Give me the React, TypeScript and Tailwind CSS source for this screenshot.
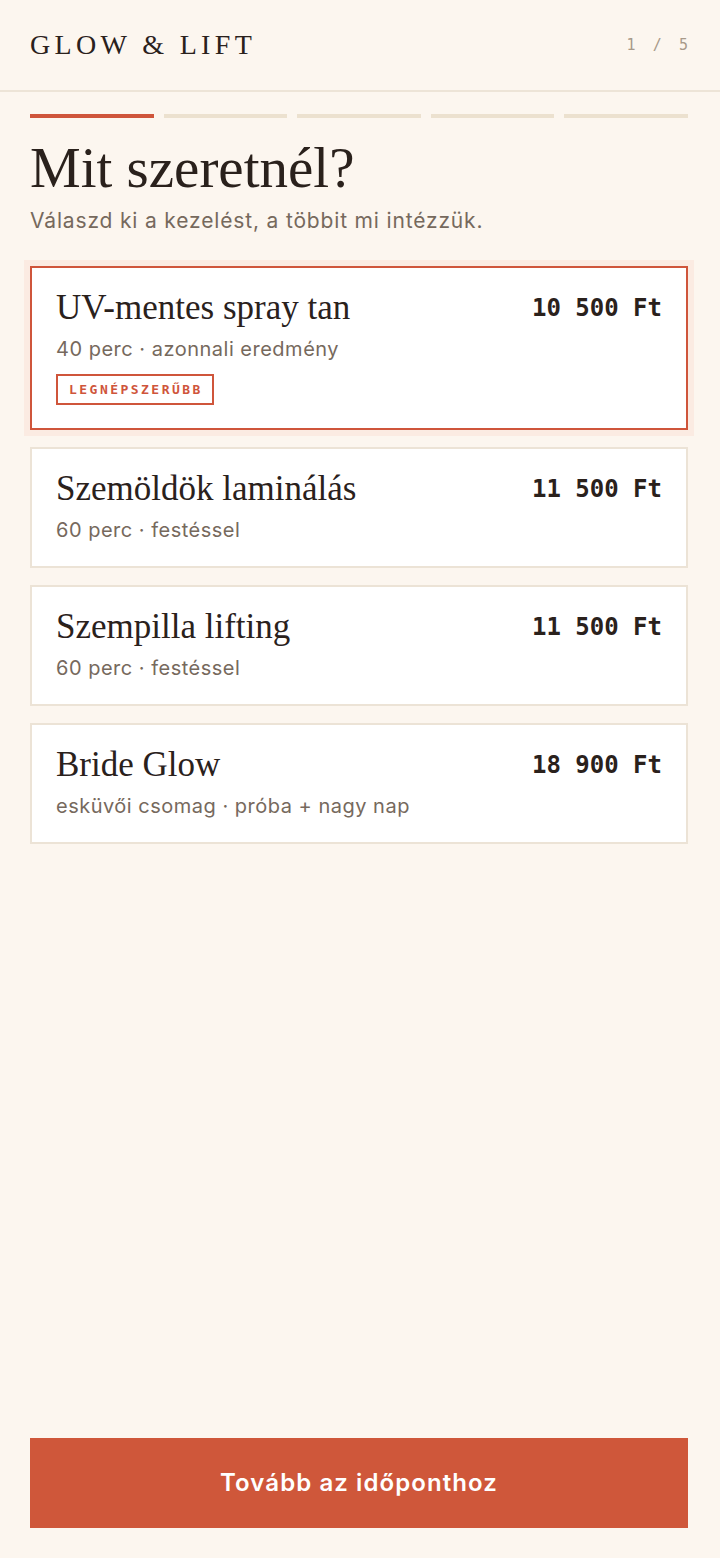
import React from 'react';

const serif = "font-['Liberation_Serif',serif]";
const sans = "font-['Inter',sans-serif]";
const mono = "font-['DejaVu_Sans_Mono',monospace]";

const treatments = [
  { name: 'UV-mentes spray tan', meta: '40 perc · azonnali eredmény', price: '10 500 Ft', badge: 'LEGNÉPSZERŰBB', selected: true },
  { name: 'Szemöldök laminálás', meta: '60 perc · festéssel', price: '11 500 Ft' },
  { name: 'Szempilla lifting', meta: '60 perc · festéssel', price: '11 500 Ft' },
  { name: 'Bride Glow', meta: 'esküvői csomag · próba + nagy nap', price: '18 900 Ft' },
];

const App = () => {
  return (
    <div className={`min-h-screen bg-[#fcf6ef] flex flex-col ${sans}`}>
      {/* Header */}
      <header className="h-[92px] border-b-2 border-[#ede4d7] pl-[30px] pr-[32px] flex items-center justify-between">
        <span className={`${serif} text-[28px] tracking-[0.155em] text-[#2a211c]`}>GLOW &amp; LIFT</span>
        <span className={`${mono} text-[15px] tracking-[0.27em] text-[#a89a8a] -mr-[4px]`}>1 / 5</span>
      </header>

      <main className="flex-1 flex flex-col pl-[30px] pr-[32px]">
        {/* Progress */}
        <div className="mt-[22px] grid grid-cols-5 gap-[10px]">
          <div className="h-1 bg-[#cf553b]" />
          <div className="h-1 bg-[#ece1cf]" />
          <div className="h-1 bg-[#ece1cf]" />
          <div className="h-1 bg-[#ece1cf]" />
          <div className="h-1 bg-[#ece1cf]" />
        </div>

        <h1 className={`${serif} mt-[19px] text-[57px] leading-[62px] text-[#2a211c]`}>Mit szeretnél?</h1>
        <p className="mt-2 text-[21px] leading-[28px] tracking-[0.04em] text-[#76695d]">
          Válaszd ki a kezelést, a többit mi intézzük.
        </p>

        {/* Treatments */}
        <div className="mt-[31px] flex flex-col gap-[17px]">
          {treatments.map((t) => (
            <div
              key={t.name}
              className={`bg-white border-2 px-6 pt-[22px] pb-[23px] ${
                t.selected ? 'border-[#cf553b] shadow-[0_0_0_6px_#fbebe2]' : 'border-[#ece3d6]'
              }`}
            >
              <div className="flex items-center justify-between">
                <span className={`${serif} text-[35px] leading-[36px] text-[#2a211c]`}>{t.name}</span>
                <span className={`${mono} font-bold text-[24px] leading-[36px] text-[#2a211c]`}>{t.price}</span>
              </div>
              <div className="mt-[10px] text-[20px] leading-[26px] tracking-[0.025em] text-[#76695d]">{t.meta}</div>
              {t.badge && (
                <div className="mt-[12px] flex">
                  <span
                    className={`${mono} font-bold border-2 border-[#cf553b] text-[#cf553b] text-[13px] leading-[27px] tracking-[0.19em] pl-[11px] pr-[9px]`}
                  >
                    {t.badge}
                  </span>
                </div>
              )}
            </div>
          ))}
        </div>

        <button className="mt-auto mb-[30px] h-[90px] w-full bg-[#cf573a] text-white text-[24px] font-semibold tracking-[0.045em]">
          Tovább az időponthoz
        </button>
      </main>
    </div>
  );
};

export default App;
